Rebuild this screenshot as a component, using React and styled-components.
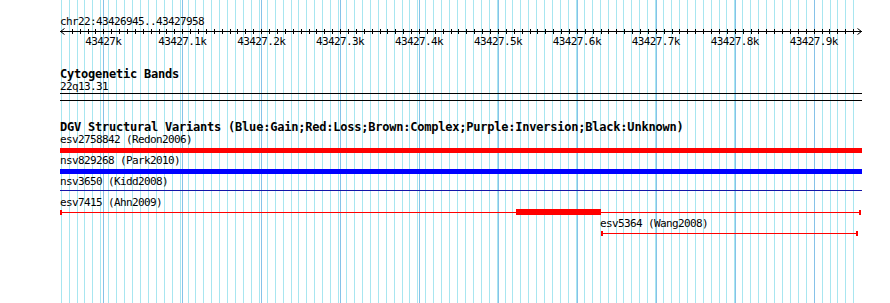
import React from "react";
import styled, { createGlobalStyle } from "styled-components";

// panel geometry (px), taken from the ruler scale of the picture
const TRACK_LEFT = 60;
const TRACK_WIDTH = 802;
const MINOR_START = 60.7;
const MINOR_STEP = 7.926;
const MAJOR_START = 103.3;
const MAJOR_STEP = 78.93;
const TICK_STEP = 7.893;

const majors = Array.from({ length: 10 }, (_, k) => ({
  x: MAJOR_START + k * MAJOR_STEP,
  label: k === 0 ? "43427k" : `43427.${k}k`,
}));

const variants = [
  { id: "esv2758842", study: "Redon2006", kind: "bar", color: "#ff0000", start: 0, end: 802 },
  { id: "nsv829268", study: "Park2010", kind: "bar", color: "#0000ff", start: 0, end: 802 },
  { id: "nsv3650", study: "Kidd2008", kind: "thin", color: "#1414a8", start: 0, end: 802 },
  { id: "esv7415", study: "Ahn2009", kind: "span", color: "#ff0000", start: 0, end: 801, core: [456, 541] },
  { id: "esv5364", study: "Wang2008", kind: "span", color: "#ff0000", start: 541, end: 798, labelAt: 540 },
];

const GlobalStyle = createGlobalStyle`
  html, body {
    margin: 0;
    padding: 0;
    background: #fff;
  }
  body {
    font-family: "DejaVu Sans Mono", "Liberation Mono", monospace;
  }
`;

const Page = styled.div`
  position: relative;
  width: 890px;
  height: 303px;
  overflow: hidden;
  background: #fff;
`;

const GridLayer = styled.svg`
  position: absolute;
  left: 0;
  top: 0;
  width: 890px;
  height: 303px;
`;

const Tracks = styled.div`
  position: relative;
  display: flex;
  flex-direction: column;
  padding-left: ${TRACK_LEFT}px;
  width: ${TRACK_WIDTH}px;
`;

const Track = styled.section`
  display: flex;
  flex-direction: column;
  margin-top: ${(p) => p.$gap || 0}px;
`;

const Label = styled.div`
  font-family: "DejaVu Sans Mono", "Liberation Mono", monospace;
  font-size: 11px;
  letter-spacing: -0.62px;
  line-height: 13px;
  height: 13px;
  color: #000;
  white-space: nowrap;
  padding-left: ${(p) => p.$indent || 0}px;
`;

const Title = styled.h2`
  margin: 0;
  font-family: "DejaVu Sans Mono", "Liberation Mono", monospace;
  font-weight: bold;
  font-size: 12px;
  letter-spacing: -0.22px;
  line-height: 12px;
  height: 12px;
  color: #000;
  white-space: nowrap;
`;

const Axis = styled.svg`
  display: block;
  width: 803px;
  height: 7px;
`;

const TickLabels = styled.div`
  position: relative;
  height: 13px;
`;

const TickLabel = styled.span`
  position: absolute;
  top: 0;
  transform: translateX(-50%);
  font-size: 11px;
  letter-spacing: -0.62px;
  line-height: 13px;
  white-space: nowrap;
  color: #000;
`;

const BandBox = styled.div`
  width: ${TRACK_WIDTH}px;
  height: 6px;
  border-top: 1px solid #000;
  border-bottom: 1px solid #000;
`;

const Lane = styled.div`
  position: relative;
  height: 8px;
`;

const Bar = styled.div`
  position: absolute;
  top: 2px;
  height: 5px;
  background: ${(p) => p.$color};
`;

const Thin = styled.div`
  position: absolute;
  top: 2px;
  height: 1px;
  background: ${(p) => p.$color};
`;

const SpanLine = styled.div`
  position: absolute;
  top: 3px;
  height: 1px;
  background: ${(p) => p.$color};
`;

const Cap = styled.div`
  position: absolute;
  top: 1px;
  width: 2px;
  height: 5px;
  background: ${(p) => p.$color};
`;

const Core = styled.div`
  position: absolute;
  top: 0;
  height: 6px;
  background: ${(p) => p.$color};
`;

function Grid() {
  const minor = Array.from({ length: 101 }, (_, i) => Math.round(MINOR_START + i * MINOR_STEP) + 0.5);
  return (
    <GridLayer viewBox="0 0 890 303" shapeRendering="crispEdges">
      {minor.map((x) => (
        <line key={`m${x}`} x1={x} x2={x} y1={0} y2={303} stroke="#a8e6f0" strokeWidth="1" />
      ))}
      {majors.map((m) => {
        const x = Math.round(m.x) + 0.5;
        return <line key={`M${x}`} x1={x} x2={x} y1={0} y2={303} stroke="#86c2e8" strokeWidth="1" />;
      })}
    </GridLayer>
  );
}

function Ruler() {
  const ticks = [];
  for (let x = MAJOR_START; x > TRACK_LEFT + 5; x -= TICK_STEP) ticks.push(x);
  for (let x = MAJOR_START + TICK_STEP; x < TRACK_LEFT + 797; x += TICK_STEP) ticks.push(x);
  return (
    <Track $gap={15}>
      <Label>chr22:43426945..43427958</Label>
      <Axis viewBox="0 0 803 7" shapeRendering="crispEdges">
        <line x1={0} x2={802} y1={3.5} y2={3.5} stroke="#000" />
        {ticks.map((t) => {
          const x = Math.round(t) - TRACK_LEFT + 0.5;
          return <line key={x} x1={x} x2={x} y1={1} y2={6} stroke="#000" />;
        })}
        <path d="M4.5 0.5 L0.5 3.5 L4.5 6.5" fill="none" stroke="#000" shapeRendering="auto" />
        <path d="M797.5 0.5 L801.5 3.5 L797.5 6.5" fill="none" stroke="#000" shapeRendering="auto" />
      </Axis>
      <TickLabels>
        {majors.map((m) => (
          <TickLabel key={m.label} style={{ left: m.x - TRACK_LEFT }}>
            {m.label}
          </TickLabel>
        ))}
      </TickLabels>
    </Track>
  );
}

function Glyph({ v }) {
  const width = v.end - v.start;
  if (v.kind === "bar") return <Bar $color={v.color} style={{ left: v.start, width }} />;
  if (v.kind === "thin") return <Thin $color={v.color} style={{ left: v.start, width }} />;
  return (
    <>
      <SpanLine $color={v.color} style={{ left: v.start, width }} />
      <Cap $color={v.color} style={{ left: v.start }} />
      <Cap $color={v.color} style={{ left: v.end - 2 }} />
      {v.core && <Core $color={v.color} style={{ left: v.core[0], width: v.core[1] - v.core[0] }} />}
    </>
  );
}

export default function App() {
  return (
    <Page>
      <GlobalStyle />
      <Grid />
      <Tracks>
        <Ruler />

        <Track $gap={20}>
          <Title>Cytogenetic Bands</Title>
          <Label>22q13.31</Label>
          <BandBox />
        </Track>

        <Track $gap={20}>
          <Title>DGV Structural Variants (Blue:Gain;Red:Loss;Brown:Complex;Purple:Inversion;Black:Unknown)</Title>
          {variants.map((v) => (
            <React.Fragment key={v.id}>
              <Label $indent={v.labelAt}>
                {v.id} ({v.study})
              </Label>
              <Lane>
                <Glyph v={v} />
              </Lane>
            </React.Fragment>
          ))}
        </Track>
      </Tracks>
    </Page>
  );
}
